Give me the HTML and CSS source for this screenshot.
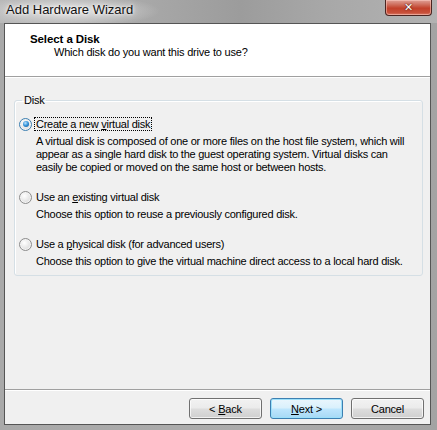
FILE: index.html
```html
<!DOCTYPE html>
<html>
<head>
<meta charset="utf-8">
<link rel="stylesheet" href="styles.css">
</head>
<body>
<div class="window">
  <div class="titlebar">
    <span class="title">Add Hardware Wizard</span>
    <div class="close"><span>✕</span></div>
  </div>
  <div class="client">
    <div class="header">
      <div class="h-title">Select a Disk</div>
      <div class="h-sub">Which disk do you want this drive to use?</div>
    </div>
    <div class="body">
      <fieldset class="group">
        <legend>Disk</legend>
        <div class="option first">
          <div class="opt-row">
            <span class="radio checked"><span class="dot"></span></span>
            <span class="opt-label focus">Create a new <u>v</u>irtual disk</span>
          </div>
          <div class="desc">A virtual disk is composed of one or more files on the host file system, which will appear as a single hard disk to the guest operating system. Virtual disks can easily be copied or moved on the same host or between hosts.</div>
        </div>
        <div class="option">
          <div class="opt-row">
            <span class="radio"></span>
            <span class="opt-label">Use an <u>e</u>xisting virtual disk</span>
          </div>
          <div class="desc">Choose this option to reuse a previously configured disk.</div>
        </div>
        <div class="option">
          <div class="opt-row">
            <span class="radio"></span>
            <span class="opt-label">Use a <u>p</u>hysical disk (for advanced users)</span>
          </div>
          <div class="desc">Choose this option to give the virtual machine direct access to a local hard disk.</div>
        </div>
      </fieldset>
    </div>
    <div class="footer">
      <button class="btn">&lt; <u>B</u>ack</button>
      <button class="btn default"><u>N</u>ext &gt;</button>
      <button class="btn">Cancel</button>
    </div>
  </div>
</div>
</body>
</html>
```
FILE: styles.css
```css
html, body {
  margin: 0;
  padding: 0;
}
body {
  width: 437px;
  height: 430px;
  overflow: hidden;
  background: #a6a6a6;
  font-family: "Liberation Sans", Arial, sans-serif;
  font-size: 11px;
  letter-spacing: -0.25px;
  color: #000;
}
.window {
  width: 437px;
  height: 430px;
  display: flex;
  flex-direction: column;
  background: linear-gradient(90deg, #a9a9a9 0%, #acacac 60%, #a3a3a3 100%);
}
.titlebar {
  height: 23px;
  display: flex;
  align-items: flex-start;
  background:
    radial-gradient(ellipse 90px 16px at 70px 11px, rgba(235,235,235,0.85), rgba(235,235,235,0) 100%),
    linear-gradient(90deg, #b9b9b9 0%, #a7a7a7 35%, #9c9c9c 55%, #a8a8a8 75%, #b2b2b2 100%);
}
.title {
  margin: 2px 0 0 6px;
  font-size: 13px;
  letter-spacing: 0;
  line-height: 16px;
  color: #111;
  text-shadow: 0 0 6px #fff, 0 0 3px #fff;
}
.close {
  margin-left: auto;
  margin-right: 5px;
  width: 45px;
  height: 15px;
  border: 1px solid #4a2420;
  border-top: none;
  border-radius: 0 0 4px 4px;
  background: linear-gradient(180deg, #e0a197 0%, #cf6f5e 30%, #c2412b 55%, #c8503a 85%, #d9806e 100%);
  box-shadow: inset 0 0 0 1px rgba(255,210,200,0.5);
  display: flex;
  justify-content: center;
  align-items: center;
}
.close span {
  color: #fff;
  font-family: "DejaVu Sans", sans-serif;
  font-weight: bold;
  font-size: 11px;
  letter-spacing: 0;
  line-height: 11px;
  text-shadow: 0 0 2px #5a1a10, 0 0 1px #5a1a10;
}
.client {
  margin-left: 4px;
  width: 425px;
  height: 400px;
  border: 1px solid #555;
  background: #f0f0f0;
  display: flex;
  flex-direction: column;
}
.header {
  height: 53px;
  background: #fff;
  border-bottom: 1px solid #a0a0a0;
  box-shadow: 0 1px 0 #fff;
  padding-left: 25px;
  box-sizing: border-box;
  padding-top: 8px;
}
.h-title {
  font-weight: bold;
  font-size: 11.5px;
  letter-spacing: -0.1px;
  line-height: 14px;
}
.h-sub {
  margin-left: 24px;
  line-height: 13px;
  letter-spacing: -0.2px;
}
.body {
  flex: 1;
  padding: 17px 7px 0 9px;
}
.group {
  margin: 0;
  padding: 10px 0 18px 4px;
  border: 1px solid #d5dfe5;
  border-radius: 3px;
  box-shadow: inset 1px 1px 0 #fff;
  height: 182px;
  box-sizing: border-box;
}
.group legend {
  padding: 0 2px;
  margin-left: 3px;
  line-height: 13px;
}
.option {
  margin-top: 16px;
}
.option.first {
  margin-top: 0;
}
.opt-row {
  display: flex;
  align-items: center;
  height: 14px;
}
.radio {
  width: 11px;
  height: 11px;
  border: 1px solid #8c8c8c;
  border-radius: 50%;
  background: radial-gradient(circle at 40% 35%, #ffffff 0%, #eaeaea 45%, #cfcfcf 100%);
  box-shadow: inset 0 0 0 1px #f4f4f4;
  display: flex;
  justify-content: center;
  align-items: center;
  flex: none;
}
.radio .dot {
  width: 6px;
  height: 6px;
  border-radius: 50%;
  background: radial-gradient(circle at 40% 35%, #b9e3ff 0%, #2f8fd6 50%, #0e4f8e 100%);
}
.radio.checked {
  border-color: #3c7fb1;
}
.opt-label {
  margin-left: 2px;
  padding: 0 1px;
  line-height: 12px;
  border: 1px solid transparent;
}
.opt-label.focus {
  border: 1px dotted #000;
}
.desc {
  margin-left: 17px;
  margin-top: 4px;
  line-height: 13px;
  width: 372px;
}
.footer {
  height: 35px;
  border-top: 1px solid #a0a0a0;
  box-shadow: inset 0 1px 0 #fff;
  display: flex;
  justify-content: flex-end;
  align-items: flex-start;
  gap: 8px;
  padding: 8px 6px 0 0;
  box-sizing: border-box;
}
.btn {
  width: 73px;
  height: 21px;
  margin: 0;
  padding: 0;
  font-family: "Liberation Sans", Arial, sans-serif;
  font-size: 11px;
  letter-spacing: -0.2px;
  color: #000;
  border: 1px solid #707070;
  border-radius: 3px;
  background: linear-gradient(180deg, #f2f2f2 0%, #ebebeb 48%, #dddddd 52%, #cfcfcf 100%);
  box-shadow: inset 0 0 0 1px rgba(255,255,255,0.7);
}
.btn.default {
  border-color: #3c7fb1;
  background: linear-gradient(180deg, #eaf6fd 0%, #d9f0fc 48%, #bee6fd 52%, #a7d9f5 100%);
  box-shadow: inset 0 0 0 1px #9ce0fa;
}
```
